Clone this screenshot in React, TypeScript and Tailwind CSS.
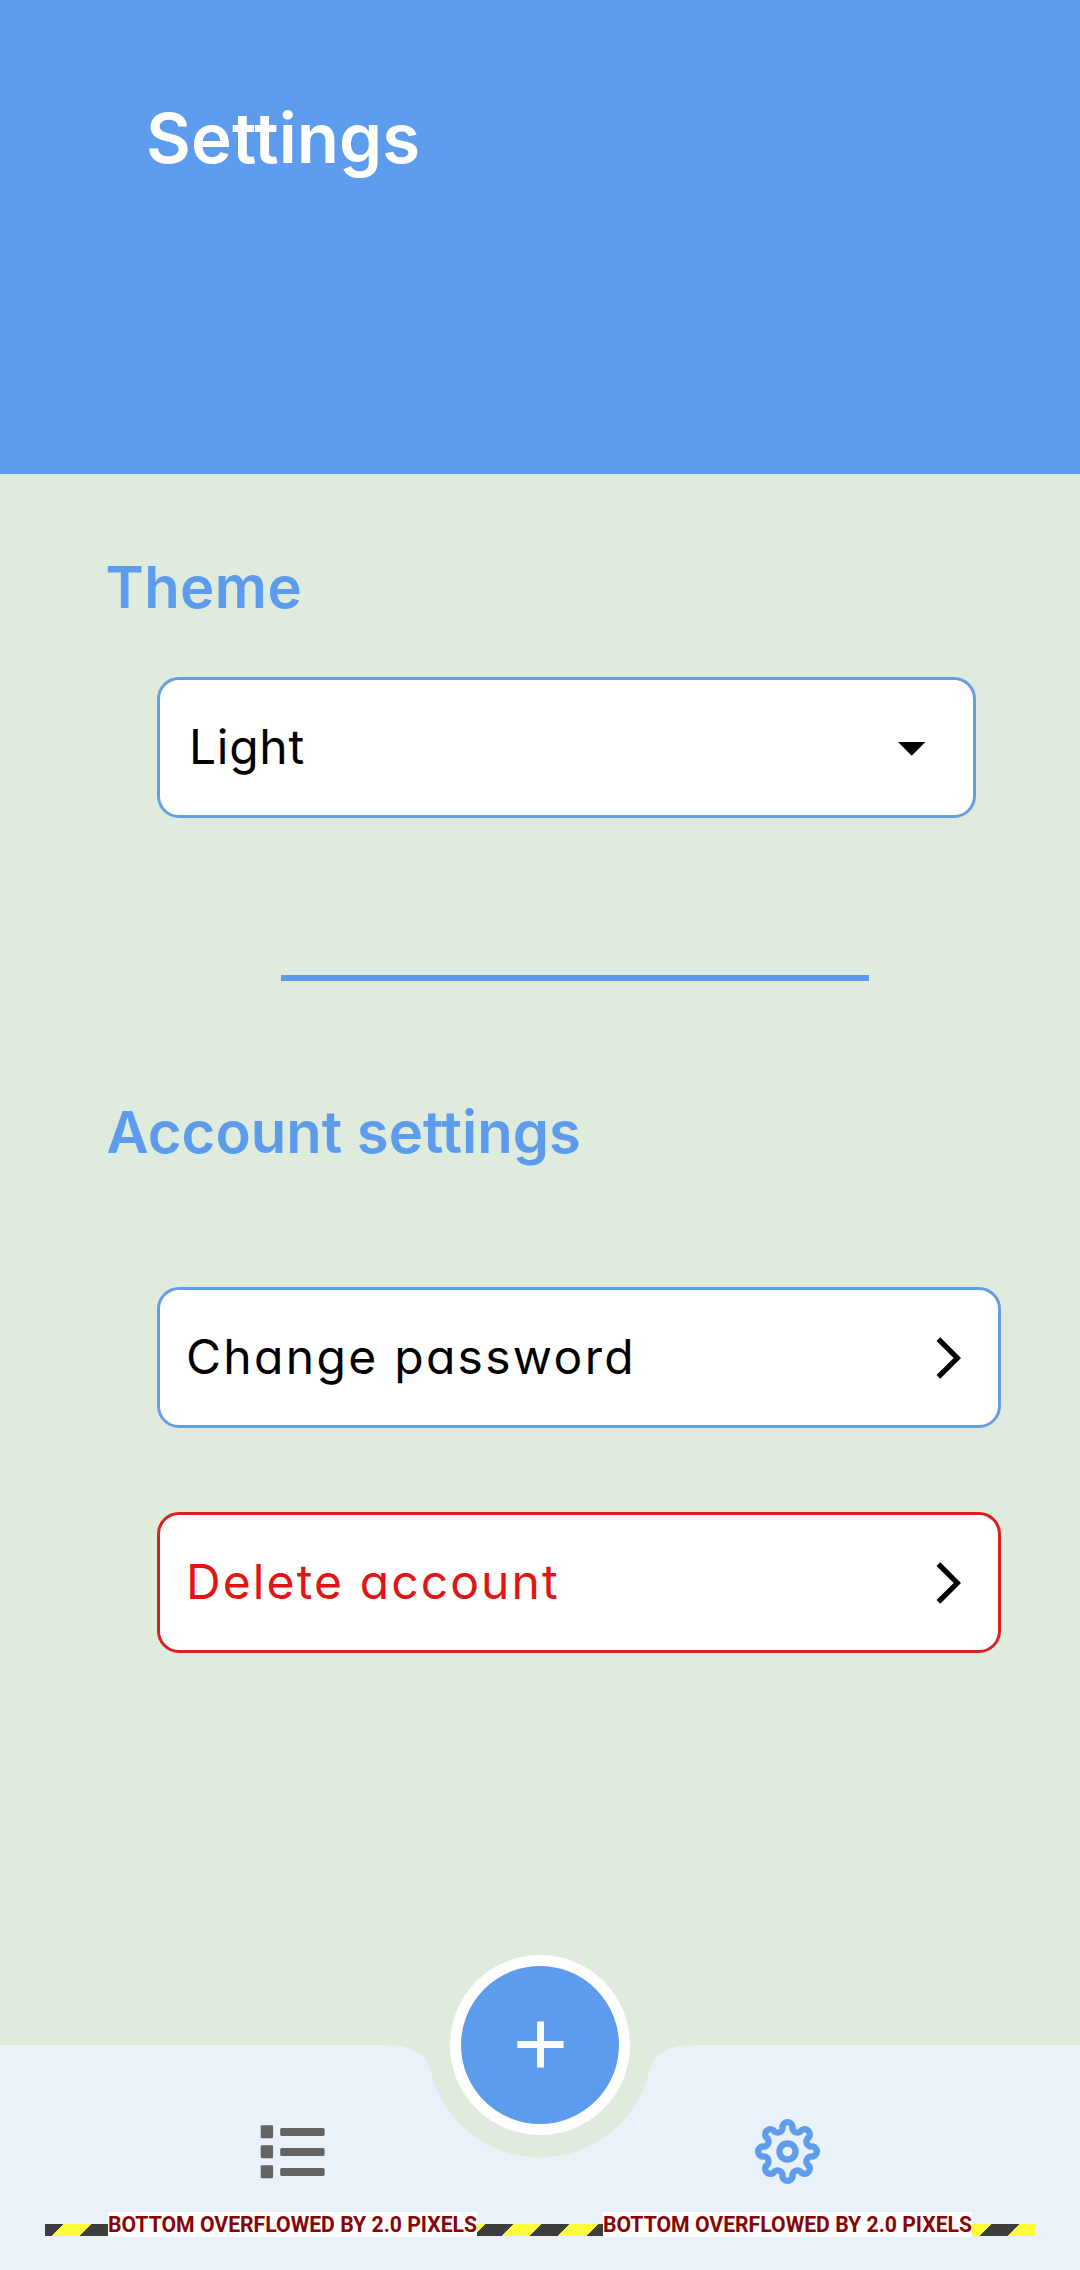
import type { ReactNode } from "react";

function gearPath() {
  const point = (deg: number) => {
    const a = ((deg - 90) * Math.PI) / 180;
    return `${(24.9 * Math.cos(a)).toFixed(2)} ${(24.9 * Math.sin(a)).toFixed(2)}`;
  };
  let d = `M${point(-11.4)}`;
  for (let i = 0; i < 8; i++) {
    d += `A5 5 0 0 1 ${point(i * 45 + 11.4)}A4.85 4.85 0 0 0 ${point(i * 45 + 33.6)}`;
  }
  return d + "Z";
}

function GearIcon() {
  return (
    <svg className="h-[69px] w-[69px]" viewBox="-33.5 -33.5 67 67" fill="none" stroke="#5f9dea" strokeWidth="6.2">
      <path d={gearPath()} />
      <circle r="7.8" />
    </svg>
  );
}

function ListIcon() {
  return (
    <svg className="h-[54px] w-[66px]" viewBox="0 0 66 54" fill="#626466">
      {[0, 20, 40].map((y) => (
        <g key={y}>
          <rect x="0.7" y={y + 0.3} width="12.4" height="13" rx="1.2" />
          <rect x="20.2" y={y + 3} width="44.4" height="8" rx="1.6" />
        </g>
      ))}
    </svg>
  );
}

function Chevron() {
  return (
    <svg className="mt-px h-[44px] w-[26px] shrink-0" viewBox="0 0 26 44" fill="none" stroke="#000" strokeWidth="5.3">
      <path d="M3.4 3.1L22.3 22L3.4 40.9" />
    </svg>
  );
}

function ActionRow({ danger, children }: { danger?: boolean; children: ReactNode }) {
  return (
    <button
      className={
        "ml-[157px] flex h-[141px] w-[844px] items-center justify-between rounded-[22px] border-[3px] bg-white pr-[37px] pl-[26px] text-[48px] leading-[60px] " +
        (danger
          ? "mt-[84px] border-[#dc1f1f] tracking-[2.1px] text-[#e31414]"
          : "border-[#659fe2] tracking-[2.3px] text-black")
      }
    >
      <span>{children}</span>
      <Chevron />
    </button>
  );
}

function OverflowLabel() {
  return (
    <span className="flex h-[25.5px] w-[369px] items-center justify-center bg-white font-['Roboto'] text-[21.2px] leading-[25px] font-bold whitespace-nowrap text-[#870505]">
      BOTTOM OVERFLOWED BY 2.0 PIXELS
    </span>
  );
}

export default function App() {
  return (
    <div className="flex h-[2270px] w-[1080px] flex-col overflow-hidden bg-[#dfebdc] font-['Inter',sans-serif] [font-feature-settings:'cv11']">
      <header className="h-[474.3px] shrink-0 bg-[#5d9bec] pt-[98px] pl-[146px]">
        <h1 className="text-[69px] leading-[80px] font-semibold tracking-[0.1px] text-white">Settings</h1>
      </header>

      <main className="flex h-[1570.7px] shrink-0 flex-col items-start">
        <h2 className="mt-[77.7px] ml-[105.5px] text-[58px] leading-[70px] font-semibold tracking-[0.4px] text-[#5d9bec]">
          Theme
        </h2>
        <button className="mt-[55px] ml-[157px] flex h-[141px] w-[819px] items-center justify-between rounded-[22px] border-[3px] border-[#659fe2] bg-white pr-[47.5px] pl-[29px] text-[48px] leading-[60px] tracking-[0.7px] text-black">
          <span>Light</span>
          <svg className="mt-[3px] h-[16px] w-[28px]" viewBox="0 0 28 16">
            <path d="M0 1H27.4L13.7 14.8Z" />
          </svg>
        </button>
        <div className="mt-[157px] ml-[281px] h-[6px] w-[588px] bg-[#5d9bec]" />
        <h2 className="mt-[116px] ml-[106.5px] text-[58px] leading-[70px] font-semibold text-[#5d9bec]">
          Account settings
        </h2>
        <div className="mt-[120px] flex flex-col">
          <ActionRow>Change password</ActionRow>
          <ActionRow danger>Delete account</ActionRow>
        </div>
      </main>

      <nav className="relative h-[225px] shrink-0">
        <svg className="absolute inset-0 h-[225px] w-[1080px]" viewBox="0 0 1080 225" fill="#eaf2f9">
          <path d="M0 0H383.5Q424.8 0 430.2 24.4A112.5 112.5 0 0 0 649.8 24.4Q655.2 0 696.5 0H1080V225H0Z" />
        </svg>
        <button className="absolute -top-[90px] left-[450px] flex h-[180px] w-[180px] items-center justify-center rounded-full border-[11px] border-white bg-[#5d9bec]">
          <svg className="h-[47px] w-[47px]" viewBox="0 0 47 47" stroke="#fff" strokeWidth="6.8">
            <path d="M0.4 23.5H46.6M23.5 0.4V46.6" />
          </svg>
        </button>
        <div className="relative mx-[45px] grid h-[167px] grid-cols-2 items-start justify-items-center">
          <div className="mt-[80px]">
            <ListIcon />
          </div>
          <div className="mt-[72.5px]">
            <GearIcon />
          </div>
        </div>
        <div className="relative mx-[45px] grid h-[25.5px] grid-cols-2 justify-items-center">
          <div className="absolute inset-x-0 top-[12px] h-[12.3px] bg-[repeating-linear-gradient(135deg,#3d3d3f_0px,#3d3d3f_13.2px,#fdfd3c_13.2px,#fdfd3c_33.1px,#3d3d3f_33.1px,#3d3d3f_39.775px)]" />
          <div className="relative">
            <OverflowLabel />
          </div>
          <div className="relative">
            <OverflowLabel />
          </div>
        </div>
      </nav>
    </div>
  );
}
